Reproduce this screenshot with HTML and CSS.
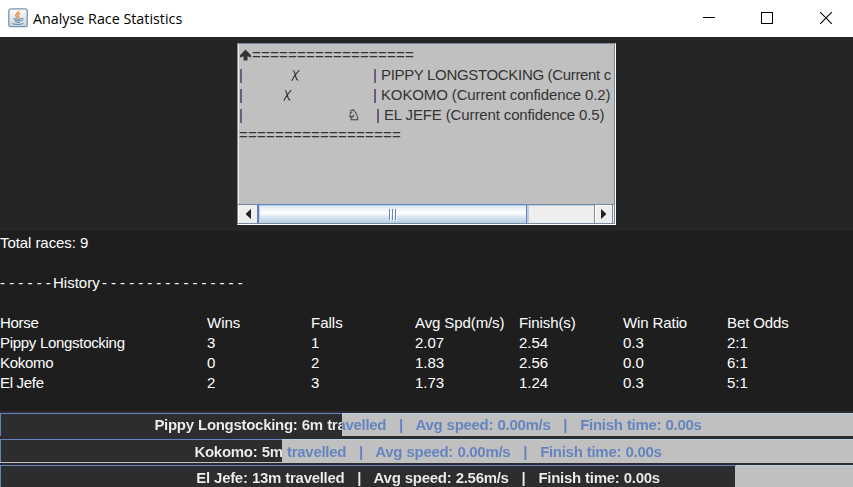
FILE: index.html
```html
<!DOCTYPE html>
<html lang="en">
<head>
<meta charset="utf-8">
<title>Analyse Race Statistics</title>
<link rel="stylesheet" href="styles.css">
</head>
<body>
<div class="window">
  <header class="titlebar">
    <svg class="app-icon" width="20" height="20" viewBox="0 0 20 20">
      <defs><linearGradient id="tile" x1="0" y1="0" x2="0" y2="1"><stop offset="0" stop-color="#fbfcfd"/><stop offset="1" stop-color="#ccd5df"/></linearGradient></defs>
      <rect x=".8" y=".8" width="18.4" height="17.9" rx="2" fill="url(#tile)" stroke="#7895ae" stroke-width="1.3"/>
      <path d="M10.600 2.800c.5 2-3.700 3-2.800 5 .3.7 1 1.100 1.400 1.900M12 5.300c-2.400 1-2.600 2-1.500 2.900.5.6.2 1.200-.6 1.600" fill="none" stroke="#e98b3d" stroke-width="1.4"/>
      <path d="M5.500 10.500c2 .8 6 .8 8.300 0M6.500 12.300c2 .6 4.500.6 6.500 0M7.200 14c1.600.5 3.500.5 5 0M13.600 10.300c2.600-.3 1.700 2.200-.3 2.700M4.500 15.200c-1.200 1.300 8.500 1.900 11 0" fill="none" stroke="#5d7f9e" stroke-width="1"/>
    </svg>
    <h1 class="title">Analyse Race Statistics</h1>
    <svg class="controls" width="130" height="14" viewBox="0 0 130 14" fill="none" stroke="#000">
      <path d="M0 6.500h12"/>
      <rect x="58.500" y="1.500" width="11" height="11"/>
      <path d="M117.200 1.200l11.600 11.600M128.800 1.200l-11.600 11.600" stroke-width="1.100"/>
    </svg>
  </header>

  <section class="race">
    <div class="pane">
      <div class="track">
        <div class="lane"><svg class="arrow" width="13" height="20" viewBox="0 0 13 20"><path d="M6.500 4.500L12 10.300v2.200L8.500 11.300V15.500h-4v-4.200L1 12.500v-2.200z" fill="#333"/></svg><span class="rail">==================</span></div>
        <div class="lane"><span class="start">|</span><svg class="runner first" width="9" height="20" viewBox="0 0 9 20"><path d="M1.800 5.500c1.400 0 1.500 1 2 3l1.200 4c.5 2 .9 2.700 2.300 2.600M8.300 5.200C6 7.500 2.500 11.500.8 15.800" fill="none" stroke="#333" stroke-width="1.100"/></svg><span class="end">|</span><span class="name pippy">PIPPY LONGSTOCKING (Current c</span></div>
        <div class="lane"><span class="start">|</span><svg class="runner second" width="9" height="20" viewBox="0 0 9 20"><path d="M1.800 5.500c1.400 0 1.500 1 2 3l1.200 4c.5 2 .9 2.700 2.300 2.600M8.300 5.200C6 7.500 2.500 11.500.8 15.800" fill="none" stroke="#333" stroke-width="1.100"/></svg><span class="end">|</span><span class="name">KOKOMO (Current confidence 0.2)</span></div>
        <div class="lane"><span class="start">|</span><span class="runner third">♘</span><span class="end">|</span><span class="name">EL JEFE (Current confidence 0.5)</span></div>
        <div class="lane"><span class="rail">==================</span></div>
      </div>
      <div class="scrollbar">
        <div class="button"><svg width="5" height="10" viewBox="0 0 5 10"><path d="M5 0v10L0 5.500v-1z" fill="#222"/></svg></div>
        <div class="thumb"><i></i><i></i><i></i></div>
        <div class="gutter"></div>
        <div class="button right"><svg width="5" height="10" viewBox="0 0 5 10"><path d="M0 0v10l5-4.500v-1z" fill="#222"/></svg></div>
      </div>
    </div>
  </section>

  <section class="stats">
    <p class="total">Total races: 9</p>
    <p class="history"><span class="dash-a">- - - - - -</span><span class="word">History</span><span class="dash-b">- - - - - - - - - - - - - - - -</span></p>
    <div class="table">
      <span class="horse">Horse</span><span>Wins</span><span>Falls</span><span class="tight">Avg Spd(m/s)</span><span class="tight">Finish(s)</span><span class="tight">Win Ratio</span><span class="tight">Bet Odds</span>
      <span class="horse">Pippy Longstocking</span><span>3</span><span>1</span><span>2.07</span><span>2.54</span><span>0.3</span><span>2:1</span>
      <span class="horse">Kokomo</span><span>0</span><span>2</span><span>1.83</span><span>2.56</span><span>0.0</span><span>6:1</span>
      <span class="horse">El Jefe</span><span>2</span><span>3</span><span>1.73</span><span>1.24</span><span>0.3</span><span>5:1</span>
    </div>
  </section>

  <section class="progress">
    <div class="bar short" style="--done:342px"><span class="label">Pippy Longstocking: 6m travelled   |   Avg speed: 0.00m/s   |   Finish time: 0.00s</span></div>
    <div class="bar lined" style="--done:282px"><span class="label">Kokomo: 5m travelled   |   Avg speed: 0.00m/s   |   Finish time: 0.00s</span></div>
    <div class="bar last" style="--done:735px"><span class="label">El Jefe: 13m travelled   |   Avg speed: 2.56m/s   |   Finish time: 0.00s</span></div>
  </section>
</div>
</body>
</html>
```
FILE: styles.css
```css
* { box-sizing: border-box; }
body { margin: 0; overflow: hidden; font: 15px/20px "Liberation Sans", Arial, sans-serif; }
p, h1 { margin: 0; }
.window { display: grid; grid-template-rows: 37px 194px 180px 76px; width: 853px; height: 487px; background: #2d2d30; }

.titlebar { display: flex; align-items: center; padding: 0 20px 0 8px; background: #fff; }
.app-icon { flex: none; margin-right: 5px; margin-top: -1px; }
.title { font: 14.300px/20px "Open Sans", "Noto Sans", sans-serif; color: #000; white-space: nowrap; }
.controls { margin: -1px 0 0 auto; }

.race { display: flex; justify-content: center; padding-top: 6px; background: #252525; }
.pane { display: flex; flex-direction: column; width: 379px; height: 182px; border: 1px solid #7a8a99; border-right-color: #fff; border-bottom-color: #fff; box-shadow: inset -1px -1px #7a8a99; padding: 0 1px 1px 0; background: #c0c0c0; }
.track { flex: 1; padding: 1px 0 0; overflow: hidden; color: #333; white-space: nowrap; border-left: 1px solid #eee; }
.lane { display: flex; height: 20px; }
.lane > * { flex: none; }
.rail { letter-spacing: .24px; }
.start { width: 5px; color: #40205a; }
.runner { font: 15px/20px "DejaVu Sans", sans-serif; }
.first { margin: 0 73px 0 47px; }
.second { margin: 0 81px 0 39px; }
.third { width: 29px; margin-left: 103px; -webkit-text-stroke: .3px #333; }
.end { width: 8px; color: #40205a; }
.name { letter-spacing: -.13px; }
.pippy { letter-spacing: -.33px; }

.scrollbar { display: flex; height: 19px; border-top: 1px solid #7a8a99; background: #eee; }
.button { display: flex; align-items: center; justify-content: center; width: 19px; border-left: 1px solid #fff; }
.right { margin-right: 1px; border-left: 1px solid #7a8a99; border-right: 1px solid #7a8a99; box-shadow: inset 1px 1px #fff; }
.thumb { display: flex; gap: 2px; align-items: center; justify-content: center; width: 270px; margin-top: -1px; border: 1px solid #6382bf; border-left-width: 2px; border-bottom: 0; box-shadow: inset 1px 1px #b8cfe5; background: linear-gradient(#dbe7f1, #fff 45%, #dbe7f1 65%, #b8cfe5); }
.thumb i { width: 1px; height: 11px; background: #6382bf; box-shadow: 1px 1px #fff; }
.gutter { flex: 1; box-shadow: inset 2px 1px #b8cfe5; }

.stats { padding-top: 2px; background: #1e1e1e; color: #fff; white-space: nowrap; }
.total { letter-spacing: -.07px; }
.history { display: flex; margin-top: 20px; }
.dash-a { width: 53px; }
.word { width: 49px; }
.dash-b { letter-spacing: -.06px; }
.table { display: grid; grid-template-columns: 207px repeat(6, 104px); grid-auto-rows: 20px; margin-top: 20px; }
.horse { letter-spacing: -.3px; }
.tight { letter-spacing: -.1px; }

.progress { overflow: hidden; padding-top: 2px; }
.bar { height: 24px; margin-bottom: 2px; border-top: 1px solid; border-image: linear-gradient(to right, #6382bf var(--done), #b8cfe5 var(--done)) 1; background: linear-gradient(to right, #6382bf 1px, #2d2d30 1px, #2d2d30 var(--done), #c0c0c0 var(--done)); }
.short { height: 23px; margin-bottom: 3px; }
.lined { box-shadow: inset 0 -1px #c0c0c0; }
.last { height: 22px; margin-bottom: 0; }
.label { display: block; height: 23px; padding-left: 3px; font-weight: 700; line-height: 23px; letter-spacing: -.3px; word-spacing: .45px; text-align: center; white-space: pre; color: transparent; background: linear-gradient(to right, #eee var(--done), #6382bf var(--done)); -webkit-background-clip: text; background-clip: text; }
.short .label { line-height: 22px; }
```
